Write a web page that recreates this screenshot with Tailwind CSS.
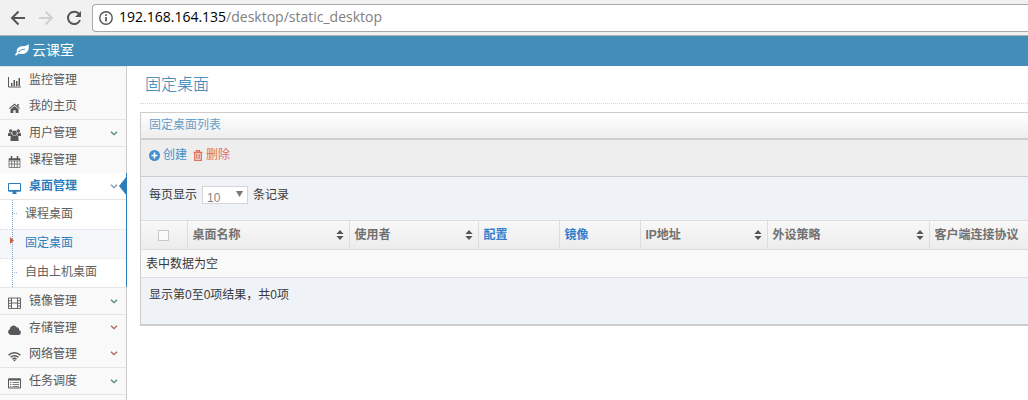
<!DOCTYPE html>
<html lang="zh-CN">
<head>
<meta charset="utf-8">
<meta name="viewport" content="width=device-width, initial-scale=1">
<title>云课室 - 固定桌面</title>
<script src="https://cdn.jsdelivr.net/npm/@tailwindcss/browser@4"></script>
</head>
<body class="flex min-h-screen flex-col bg-white font-['Liberation_Sans','Noto_Sans_CJK_SC',sans-serif] text-xs text-[#393939]">

<svg class="hidden" aria-hidden="true">
  <symbol id="chevron" viewBox="0 0 8 5"><path d="M1 .7 4 3.7 7 .7" fill="none" stroke="currentColor" stroke-width="1.300"/></symbol>
  <symbol id="sort" viewBox="0 0 8 10"><path d="M4 0 7.6 4H.4zM4 10 .4 6h7.2z" fill="currentColor"/></symbol>
</svg>

<!-- Browser toolbar -->
<header class="flex h-9 shrink-0 items-center border-b border-[#b0b0b0] bg-[#f1f1f1] pl-2.5">
  <button aria-label="后退" class="mr-3 text-[#555]"><svg class="size-4" viewBox="0 0 16 16" fill="none" stroke="currentColor" stroke-width="2"><path d="M15 8H2.5M8.5 1.5 2 8l6.500 6.500"/></svg></button>
  <button aria-label="前进" class="mr-3 text-[#d0d0d0]"><svg class="size-4" viewBox="0 0 16 16" fill="none" stroke="currentColor" stroke-width="2"><path d="M1 8h12.500M7.500 1.500 14 8l-6.500 6.500"/></svg></button>
  <button aria-label="刷新" class="mr-2.5 text-[#555]"><svg class="size-4" viewBox="0 0 16 16"><path d="M13.200 4.200A6.200 6.200 0 1 0 14 10" fill="none" stroke="currentColor" stroke-width="2"/><path d="M15 1v6H9z" fill="currentColor"/></svg></button>
  <div class="flex h-7 flex-1 items-center rounded-l-sm border border-r-0 border-[#a9a9a9] bg-white pl-1.5">
    <svg class="mr-1.5 size-3.5" viewBox="0 0 14 14" fill="none" stroke="#555"><circle cx="7" cy="7" r="6.200" stroke-width="1.400"/><path d="M7 6v4.500M7 3.300v1.700" stroke-width="1.700"/></svg>
    <div class="pb-0.5 font-['Open_Sans',sans-serif] text-sm text-[#808080]"><span class="text-black">192.168.164.135</span>/desktop/static_desktop</div>
  </div>
</header>

<!-- Application bar -->
<div class="flex h-[30px] shrink-0 items-center bg-[#438eb9] pb-0.5 pl-[15px]">
  <a href="#" class="flex items-center gap-[3px] text-sm leading-none text-white">
    <svg class="h-3 w-3.5" viewBox="0 0 14 12"><path d="M13.500 0c1.200 5-1 9.500-5.500 10-2 .2-3.500-.6-4.600-.3-.7.200-1.200 1.800-2.200 1.800-.7 0-1.200-.7-1-1.200.3-.8 1.500-1.300 1.600-2C1.300 4 4.200 2.500 8 2.300 11 2.200 12.300 1.300 13.500 0z" fill="#fff"/><path d="M3.500 8C5.500 5.800 7 5.200 10 5" fill="none" stroke="#438eb9" stroke-width="1.100"/></svg>
    云课室
  </a>
</div>

<div class="flex flex-1">
  <!-- Sidebar -->
  <nav class="w-[127px] shrink-0 border-r border-[#ccc] bg-[#f9f9f9] text-[#585858]">
    <ul>
      <li><a href="#" class="flex h-[27px] items-center border-t border-[#e5e5e5] pl-2">
        <svg class="mt-1 mr-2 h-3 w-[13px]" viewBox="0 0 13 12"><path d="M.500 1v10H13" fill="none" stroke="currentColor"/><path d="M3 7h1.500v3H3zM5.500 4H7v6H5.500zM8 5h1.500v5H8zM10.500 2H12v8h-1.500z" fill="currentColor"/></svg>监控管理</a></li>
      <li><a href="#" class="flex h-[26px] items-center pl-2">
        <svg class="mt-1 mr-2 h-3 w-[13px]" viewBox="0 0 13 12" fill="currentColor"><path d="M6.500 1.500 12 6.300l-.7.800-4.800-4-4.800 4-.7-.8z"/><path d="M9.200 2h1.500v3l-1.500-1z"/><path d="M2.500 7.300 6.500 4l4 3.300V11H7.600V8.300H5.400V11H2.500z"/></svg>我的主页</a></li>
      <li><a href="#" class="flex h-[27px] items-center border-t border-[#e5e5e5] pr-2 pl-2">
        <svg class="mt-1 mr-2 h-3 w-[13px]" viewBox="0 0 13 12" fill="currentColor"><circle cx="2.700" cy="2" r="1.700"/><circle cx="10.300" cy="2" r="1.700"/><circle cx="6.500" cy="4" r="2.400"/><path d="M0 7V5.500C0 4 .8 3.500 1.700 3.800L4 5v2zM13 7V5.500c0-1.500-.8-2-1.700-1.700L9 5v2zM2.500 12V8.700C2.500 7 3.500 6 4.500 6L6.500 7l2-1c1 0 2 1 2 2.700V12z"/></svg>用户管理
        <svg class="ml-auto h-[5px] w-2 text-[#4f8676]"><use href="#chevron"/></svg></a></li>
      <li><a href="#" class="flex h-[27px] items-center border-t border-[#e5e5e5] pl-2">
        <svg class="mt-1 mr-2 h-3 w-[13px]" viewBox="0 0 13 12" fill="none" stroke="currentColor"><path d="M1 2.500h11v9H1zM1 5h11M1 8h11M3.700 5v6.500M6.500 5v6.500M9.200 5v6.500" stroke-width=".7"/><path d="M1 3.500h11" stroke-width="1.500"/><path d="M3.500 0v3M9.500 0v3" stroke-width="1.500"/></svg>课程管理</a></li>
      <li>
        <a href="#" class="relative flex h-[26px] items-center bg-white pr-2 pl-2 font-bold text-[#2b7dbc]">
          <svg class="mt-1 mr-2 h-3 w-[13px]" viewBox="0 0 13 12"><path d="M.500 1.500h12v7.500H.500z" fill="none" stroke="currentColor"/><path d="M.500 8h12v1.500H.500zM5 9h3l.7 3H4.300z" fill="currentColor"/></svg>桌面管理
          <svg class="ml-auto h-[5px] w-2 text-[#7a97b8]"><use href="#chevron"/></svg>
          <svg class="absolute top-[3px] -right-px h-5 w-2" viewBox="0 0 8 20"><path d="M8 0v20L0 10z" fill="#2b7dbc"/></svg>
          <span class="absolute inset-y-0 -right-px w-px bg-[#2b7dbc]"></span>
        </a>
        <div class="relative border-t border-[#e5e5e5] bg-white">
          <span class="absolute -top-px right-[-1px] bottom-0 w-px bg-[#2b7dbc]"></span>
          <ul class="leading-none text-[#616161]">
            <li><a href="#" class="flex h-[29px] items-center pb-0.5 pl-3"><span class="mr-2 w-[5px] border-t border-dotted border-[#9dbdd6]"></span>课程桌面</a></li>
            <li><a href="#" class="flex h-[29px] items-center border-t border-dotted border-[#dcdcdc] bg-[#f5f7fb] pb-0.5 pl-[25px] text-[#2b7dbc]">固定桌面</a></li>
            <li><a href="#" class="flex h-[29px] items-center border-t border-dotted border-[#dcdcdc] pb-0.5 pl-3"><span class="mr-2 w-[5px] border-t border-dotted border-[#9dbdd6]"></span>自由上机桌面</a></li>
          </ul>
          <span class="absolute inset-y-0 left-3 border-l border-dotted border-[#7fa9cc]"></span>
          <svg class="absolute top-[37px] left-2.5 h-[7px] w-1" viewBox="0 0 4 7"><path d="M0 0 4 3.500 0 7z" fill="#c86139"/></svg>
        </div>
      </li>
      <li><a href="#" class="flex h-[27px] items-center border-t border-[#e5e5e5] pr-2 pl-2">
        <svg class="mt-1 mr-2 h-3 w-[13px]" viewBox="0 0 13 12" fill="none" stroke="currentColor" stroke-width=".9"><path d="M.500 1h12v10.500H.500zM3.500 1v10.500M9.500 1v10.500M3.500 6h6M.500 3.700h3M.500 6.300h3M.500 9h3M9.500 3.700h3M9.500 6.300h3M9.500 9h3"/></svg>镜像管理
        <svg class="ml-auto h-[5px] w-2 text-[#4f8676]"><use href="#chevron"/></svg></a></li>
      <li><a href="#" class="flex h-[26px] items-center border-t border-[#e5e5e5] pr-2 pl-2">
        <svg class="mt-1 mr-2 h-3 w-[13px]" viewBox="0 0 13 12" fill="currentColor"><path d="M3 11a3 3 0 0 1-1.200-5.700A3.700 3.700 0 0 1 8.700 3.400a2 2 0 0 1 2.300 2.500A2.600 2.600 0 0 1 10.500 11z"/></svg>存储管理
        <svg class="ml-auto h-[5px] w-2 text-[#a8655c]"><use href="#chevron"/></svg></a></li>
      <li><a href="#" class="flex h-[27px] items-center pr-2 pl-2">
        <svg class="mt-1 mr-2 h-3 w-[13px]" viewBox="0 0 13 12" fill="none" stroke="currentColor" stroke-width="1.500"><path d="M.600 5.200a8.500 8.500 0 0 1 11.800 0M2.600 7.300a5.600 5.600 0 0 1 7.800 0M4.500 9.200a3 3 0 0 1 4 0"/><path d="M5 9.700h3L6.500 11.500z" fill="currentColor" stroke="none"/></svg>网络管理
        <svg class="ml-auto h-[5px] w-2 text-[#a8655c]"><use href="#chevron"/></svg></a></li>
      <li class="border-b border-[#e5e5e5]"><a href="#" class="flex h-[27px] items-center border-t border-[#e5e5e5] pr-2 pl-2">
        <svg class="mt-1 mr-2 h-3 w-[13px]" viewBox="0 0 13 12" fill="none" stroke="currentColor"><path d="M.500 2h12v9H.500z"/><path d="M.500 2.500h12" stroke-width="2"/><path d="M2 5.500h1.300M4.500 5.500h6.500M2 7.500h1.300M4.500 7.500h6.500M2 9.500h1.300M4.500 9.500h6.500" stroke-width=".8"/></svg>任务调度
        <svg class="ml-auto h-[5px] w-2 text-[#4f8676]"><use href="#chevron"/></svg></a></li>
    </ul>
  </nav>

  <!-- Content -->
  <main class="min-w-0 flex-1 pl-[13px]">
    <h1 class="flex h-[38px] items-center border-b border-dotted border-[#d5d5d5] pl-[5px] text-base font-light text-[#2679b5]">固定桌面</h1>

    <section class="mt-2 border border-r-0 border-b-2 border-[#ccc] bg-[#eff3f8]">
      <h2 class="flex h-[27px] items-center border-b-2 border-[#cfcfcf] bg-linear-to-b from-white to-[#eee] pb-0.5 pl-2 text-[#669fc7]">固定桌面列表</h2>
      <div class="flex h-[37px] items-center gap-1.5 border-b border-[#ccc] bg-[#eee] pb-1.5 pl-2">
        <button class="flex items-center gap-[3px] text-[#478fca]"><svg class="size-[11px]" viewBox="0 0 11 11"><circle cx="5.500" cy="5.500" r="5.500" fill="currentColor"/><path d="M5.500 2.500v6M2.500 5.500h6" stroke="#fff" stroke-width="1.700"/></svg>创建</button>
        <button class="flex items-center gap-[3px] text-[#e0705d]"><svg class="h-[11px] w-[10px]" viewBox="0 0 10 11" fill="none" stroke="currentColor"><path d="M.500 2.500h9M3.500 2.500V.700h3v1.800M1.700 2.500v7.800h6.600V2.500" stroke-width="1.300"/><path d="M3.600 4v5M5 4v5M6.400 4v5" stroke-width=".9"/></svg>删除</button>
      </div>

      <div class="flex h-[43px] items-center gap-[5px] pb-2 pl-2">
        <label for="size">每页显示</label>
        <span class="relative flex">
          <select id="size" class="h-[18px] w-[46px] appearance-none border border-[#d5d5d5] bg-white pt-[5px] pl-1 text-xs leading-none text-[#858585]"><option>10</option><option>25</option><option>50</option></select>
          <svg class="pointer-events-none absolute top-[5px] right-[5px] h-1.5 w-[7px]" viewBox="0 0 7 6"><path d="M0 0h7L3.500 6z" fill="#777"/></svg>
        </span>
        <span>条记录</span>
      </div>

      <table class="w-full table-fixed border-collapse border-y border-[#ddd]">
        <thead>
          <tr class="h-[29px] bg-linear-to-b from-[#f8f8f8] to-[#ececec] text-left text-[#707070] [&>th]:border-r [&>th]:border-[#ddd] [&>th:last-child]:border-r-0">
            <th class="w-[46px]"><input type="checkbox" aria-label="全选" class="mx-auto block size-[11px] appearance-none border border-[#c8c8c8] bg-[#fafafa]"></th>
            <th class="w-[162px] px-[5px]"><div class="flex items-center justify-between">桌面名称<svg class="h-2.5 w-2 text-[#555]"><use href="#sort"/></svg></div></th>
            <th class="w-[129px] px-[5px]"><div class="flex items-center justify-between">使用者<svg class="h-2.5 w-2 text-[#555]"><use href="#sort"/></svg></div></th>
            <th class="w-[81px] px-[5px] text-[#307ecc]">配置</th>
            <th class="w-[81px] px-[5px] text-[#307ecc]">镜像</th>
            <th class="w-[127px] px-[5px]"><div class="flex items-center justify-between">IP地址<svg class="h-2.5 w-2 text-[#555]"><use href="#sort"/></svg></div></th>
            <th class="w-[162px] px-[5px]"><div class="flex items-center justify-between">外设策略<svg class="h-2.5 w-2 text-[#555]"><use href="#sort"/></svg></div></th>
            <th class="px-[5px] whitespace-nowrap">客户端连接协议</th>
          </tr>
        </thead>
        <tbody>
          <tr class="h-7 border-t border-[#ddd] bg-[#f9f9f9]"><td colspan="8" class="pl-[5px]">表中数据为空</td></tr>
        </tbody>
      </table>

      <p class="flex h-[46px] items-center pb-3 pl-2">显示第0至0项结果，共0项</p>
    </section>
  </main>
</div>
</body>
</html>
